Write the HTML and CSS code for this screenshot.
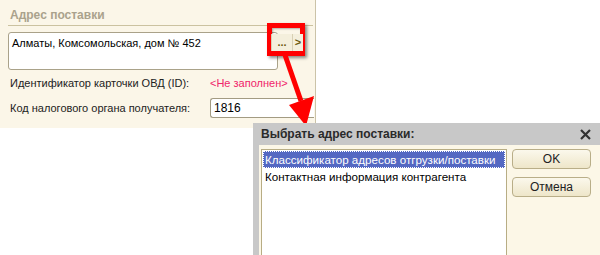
FILE: index.html
```html
<!DOCTYPE html>
<html>
    <head>
        <title>Адрес поставки</title>
        <link rel="stylesheet" href="styles.css">
    </head>
    <body>
        <div class="panel">
            <div class="group-title">Адрес поставки</div>
            <div class="address-box">
                <div class="address-text">Алматы, Комсомольская, дом № 452</div>
                <div class="address-buttons">
                    <span class="btn-dots">...</span>
                    <span class="btn-more">&gt;</span>
                </div>
            </div>
            <div class="row">
                <span class="label">Идентификатор карточки ОВД (ID):</span>
                <span class="empty">&lt;Не заполнен&gt;</span>
            </div>
            <div class="row">
                <span class="label">Код налогового органа получателя:</span>
                <span class="field">1816</span>
            </div>
        </div>

        <div class="highlight"></div>
        <svg class="arrow" width="60" height="80" viewBox="0 0 60 80">
            <line x1="19" y1="0" x2="35" y2="46" stroke="#ff0000" stroke-width="5"/>
            <polygon points="23,50 48,41 40,71" fill="#ff0000"/>
        </svg>

        <div class="dialog">
            <div class="dialog-title">
                <span>Выбрать адрес поставки:</span>
                <svg class="close" width="11" height="11" viewBox="0 0 11 11">
                    <path d="M1 1 L10 10 M10 1 L1 10" stroke="#333" stroke-width="2.2"/>
                </svg>
            </div>
            <div class="dialog-body">
                <ul class="list">
                    <li class="selected">Классификатор адресов отгрузки/поставки</li>
                    <li>Контактная информация контрагента</li>
                </ul>
                <div class="buttons">
                    <button>OK</button>
                    <button>Отмена</button>
                </div>
            </div>
        </div>
    </body>
</html>
```

FILE: styles.css
```css
body
{
    margin: 0;
    background: #fff;
    font-family: 'Liberation Sans', Arial, sans-serif;
    font-size: 11px;
    color: #000;
    position: relative;
    width: 600px;
    height: 255px;
    overflow: hidden;
}
.panel
{
    width: 316px;
    height: 128px;
    padding: 7px 0 0 8px;
    box-sizing: border-box;
    background: #fbf6e8;
    border-right: 1px solid #cbc3a8;
}
.group-title
{
    color: #aaa28c;
    font-weight: bold;
    font-size: 12px;
    padding: 1px 0 3px 2px;
    border-bottom: 1px solid #cbc2a0;
    margin-right: 2px;
}
.address-box
{
    margin-top: 6px;
    width: 268px;
    height: 36px;
    border: 1px solid #aaa289;
    border-radius: 3px;
    background: #fff;
    display: flex;
    justify-content: space-between;
    align-items: flex-start;
}
.address-text
{
    padding: 4px 3px;
}
.address-buttons
{
    display: flex;
    margin: 1px -26px 0 0;
    position: relative;
    z-index: 2;
}
.btn-dots, .btn-more
{
    height: 17px;
    line-height: 17px;
    background: #f4efdc;
    border-left: 1px solid #d8d0b4;
    color: #6b5a10;
    font-weight: bold;
    text-align: center;
}
.btn-dots
{
    width: 20px;
}
.btn-more
{
    width: 10px;
}
.row
{
    display: flex;
    align-items: center;
    height: 24px;
    margin-top: 1px;
}
.row:first-of-type
{
    margin-top: 6px;
}
.label
{
    color: #222;
    width: 200px;
    padding-left: 2px;
}
.empty
{
    color: #f0246a;
}
.field
{
    width: 104px;
    height: 20px;
    line-height: 18px;
    border: 1px solid #a39b82;
    border-right: none;
    border-radius: 3px 0 0 3px;
    background: #fff;
    padding-left: 3px;
    box-sizing: border-box;
    font-size: 12px;
}
.highlight
{
    position: absolute;
    left: 267px;
    top: 23px;
    width: 28px;
    height: 23px;
    border: 5px solid #ff0000;
    box-shadow: 2px 2px 3px rgba(0, 0, 0, 0.45), inset 1px 1px 2px rgba(0, 0, 0, 0.3);
}
.arrow
{
    position: absolute;
    left: 266px;
    top: 55px;
}
.dialog
{
    position: absolute;
    left: 253px;
    top: 123px;
    width: 347px;
    height: 140px;
    background: #c8c8c8;
    padding: 0 0 0 6px;
    box-sizing: border-box;
}
.dialog-title
{
    display: flex;
    justify-content: space-between;
    align-items: center;
    height: 22px;
    padding: 0 9px 0 2px;
    font-weight: bold;
    font-size: 12px;
    color: #2a2a2a;
}
.dialog-body
{
    background: #fcf7e7;
    height: 120px;
    display: flex;
    gap: 5px;
    padding: 4px 0 0 2px;
    box-sizing: border-box;
}
.list
{
    list-style: none;
    margin: 0;
    padding: 1px;
    width: 246px;
    height: 110px;
    box-sizing: border-box;
    background: #fff;
    border: 1px solid #b8ad84;
    font-size: 11.6px;
}
.list li
{
    height: 17px;
    line-height: 17px;
    padding-left: 2px;
}
.list li.selected
{
    background: #5468c2;
    color: #fff;
    outline: 1px dotted #fff;
    outline-offset: -1px;
}
.buttons
{
    display: flex;
    flex-direction: column;
    gap: 8px;
}
button
{
    width: 79px;
    height: 20px;
    border: 1px solid #b9ae88;
    border-radius: 4px;
    background: linear-gradient(#fbf8ec, #eee6c9);
    font-family: 'Liberation Sans', Arial, sans-serif;
    font-size: 12px;
    color: #222;
    padding: 0;
}
```
